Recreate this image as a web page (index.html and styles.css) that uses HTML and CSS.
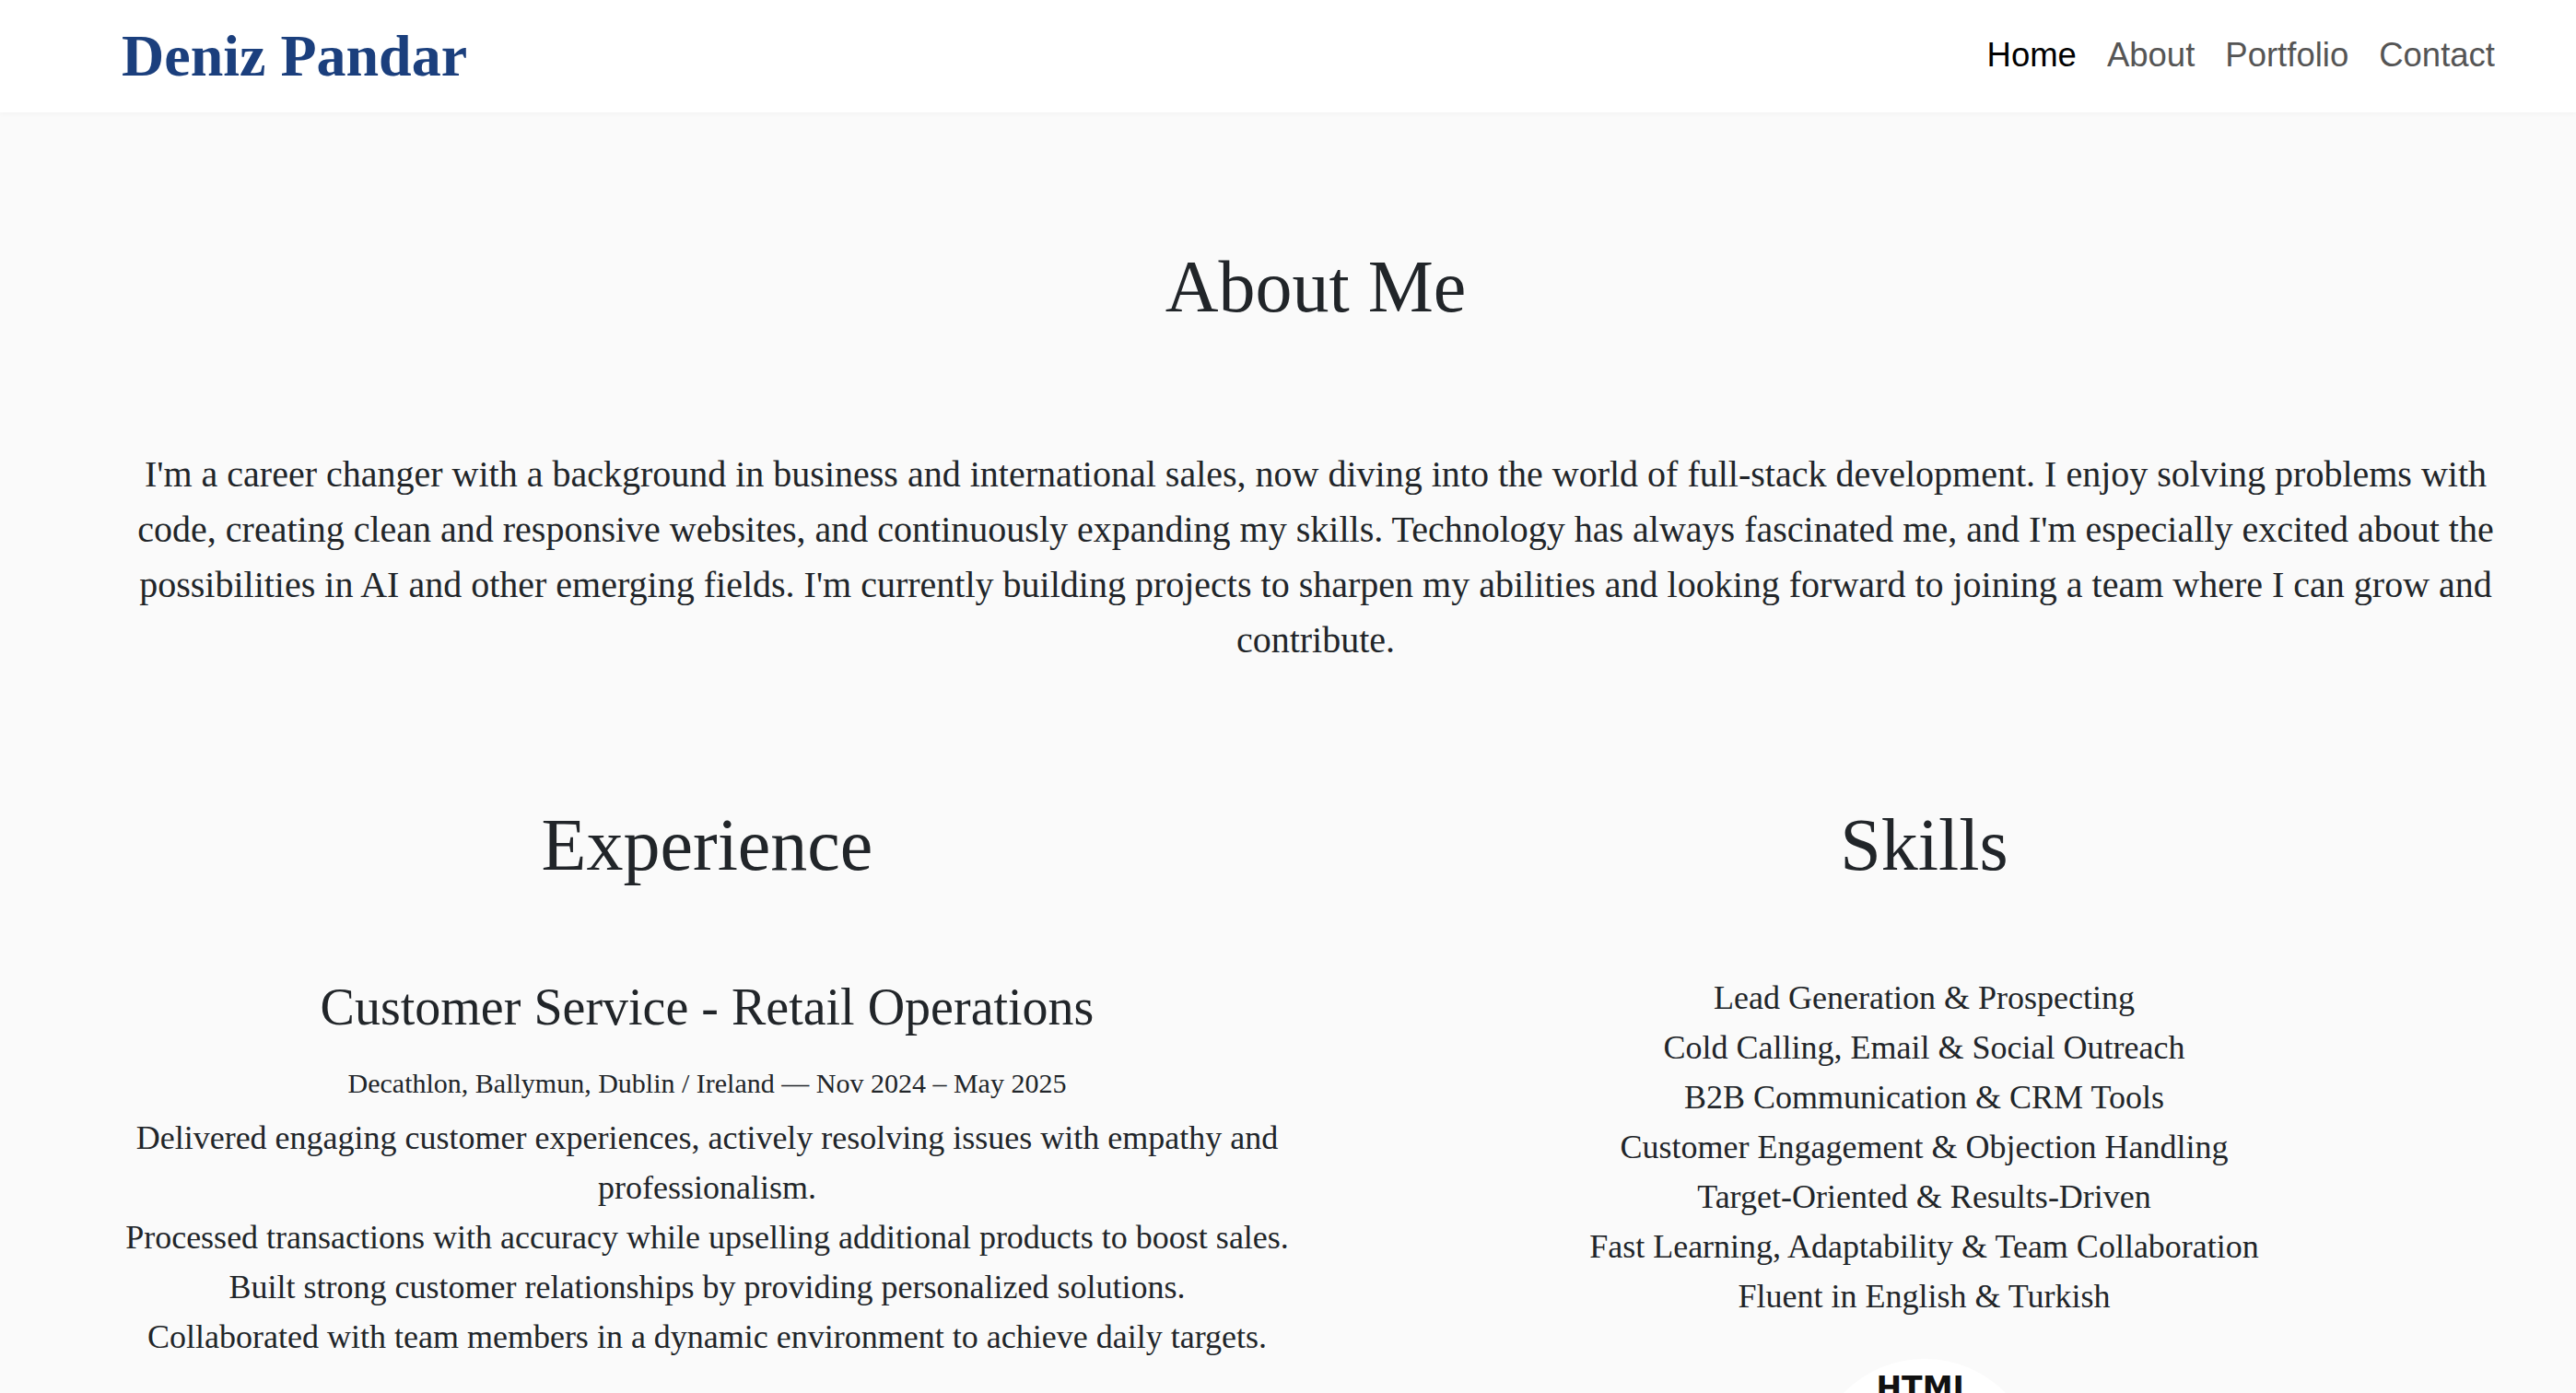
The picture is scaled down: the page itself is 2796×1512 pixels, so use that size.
FILE: index.html
```html
<!DOCTYPE html>
<html lang="en">
<head>
<meta charset="utf-8">
<title>Deniz Pandar - About</title>
<link rel="stylesheet" href="styles.css">
</head>
<body>
<header class="site-header">
  <a class="brand" href="#">Deniz Pandar</a>
  <nav class="main-nav">
    <a class="nav-link active" href="#">Home</a>
    <a class="nav-link" href="#">About</a>
    <a class="nav-link" href="#">Portfolio</a>
    <a class="nav-link" href="#">Contact</a>
  </nav>
</header>

<main class="page">
  <section class="about">
    <h1 class="section-title">About Me</h1>
    <p class="intro">I'm a career changer with a background in business and international sales, now diving into the world of full-stack development. I enjoy solving problems with code, creating clean and responsive websites, and continuously expanding my skills. Technology has always fascinated me, and I'm especially excited about the possibilities in AI and other emerging fields. I'm currently building projects to sharpen my abilities and looking forward to joining a team where I can grow and contribute.</p>
  </section>

  <section class="columns">
    <div class="column">
      <h2 class="section-title">Experience</h2>
      <article class="job">
        <h3 class="job-title">Customer Service - Retail Operations</h3>
        <p class="job-meta">Decathlon, Ballymun, Dublin / Ireland — Nov 2024 – May 2025</p>
        <ul class="plain-list">
          <li>Delivered engaging customer experiences, actively resolving issues with empathy and professionalism.</li>
          <li>Processed transactions with accuracy while upselling additional products to boost sales.</li>
          <li>Built strong customer relationships by providing personalized solutions.</li>
          <li>Collaborated with team members in a dynamic environment to achieve daily targets.</li>
        </ul>
      </article>
    </div>
    <div class="column">
      <h2 class="section-title">Skills</h2>
      <ul class="plain-list skills-list">
        <li>Lead Generation &amp; Prospecting</li>
        <li>Cold Calling, Email &amp; Social Outreach</li>
        <li>B2B Communication &amp; CRM Tools</li>
        <li>Customer Engagement &amp; Objection Handling</li>
        <li>Target-Oriented &amp; Results-Driven</li>
        <li>Fast Learning, Adaptability &amp; Team Collaboration</li>
        <li>Fluent in English &amp; Turkish</li>
      </ul>
      <div class="tech-badge">
        <span class="tech-word">HTML</span>
        <svg class="tech-shield" viewBox="0 0 100 110" width="110" height="120" aria-hidden="true">
          <path d="M8 0 L92 0 L84 95 L50 106 L16 95 Z" fill="#e44d26"/>
          <path d="M50 8 L84 8 L77 88 L50 96 Z" fill="#f16529"/>
        </svg>
      </div>
    </div>
  </section>
</main>
</body>
</html>
```

FILE: styles.css
```css
html, body {
  margin: 0;
  padding: 0;
}

body {
  background: #fafafa;
  color: #212529;
  font-family: "Liberation Serif", "Times New Roman", serif;
}

.site-header {
  display: flex;
  align-items: center;
  justify-content: space-between;
  height: 122px;
  padding: 0 88px 0 132px;
  background: #ffffff;
  box-shadow: 0 2px 5px rgba(0, 0, 0, 0.03);
}

.brand {
  font-family: "Liberation Serif", "Times New Roman", serif;
  font-weight: 700;
  font-size: 64px;
  line-height: 1;
  color: #1b3f7d;
  text-decoration: none;
}

.main-nav {
  display: flex;
  gap: 33px;
  margin-top: -2px;
}

.nav-link {
  font-family: "Liberation Sans", Arial, sans-serif;
  font-size: 36.5px;
  line-height: 1;
  color: #555555;
  text-decoration: none;
}

.nav-link.active {
  color: #000000;
}

.page {
  padding: 0 70px 0 130px;
}

.about {
  text-align: center;
}

.section-title {
  margin: 0;
  font-size: 80px;
  line-height: 96px;
  font-weight: 400;
  text-align: center;
}

.about .section-title {
  margin-top: 141px;
}

.intro {
  margin: 126px 0 0;
  font-size: 40px;
  line-height: 60px;
}

.columns {
  display: grid;
  grid-template-columns: 1fr 1fr;
  gap: 46px;
  margin-top: 144px;
  text-align: center;
}

.job-title {
  margin: 95px 0 0;
  font-size: 56px;
  line-height: 67px;
  font-weight: 400;
}

.job-meta {
  margin: 26px 0 0;
  font-size: 30px;
  line-height: 45px;
}

.plain-list {
  list-style: none;
  margin: 10px 0 0;
  padding: 0;
  font-size: 36px;
  line-height: 54px;
}

.skills-list {
  margin-top: 91px;
}

.tech-badge {
  display: flex;
  flex-direction: column;
  align-items: center;
  width: 246px;
  height: 246px;
  margin: 41px auto 0;
  padding-top: 12px;
  box-sizing: border-box;
  border-radius: 50%;
  background: #ffffff;
}

.tech-word {
  font-family: "DejaVu Sans", "Liberation Sans", sans-serif;
  font-weight: 900;
  font-size: 33px;
  line-height: 40px;
  color: #111111;
}

.tech-shield {
  display: block;
}
```
